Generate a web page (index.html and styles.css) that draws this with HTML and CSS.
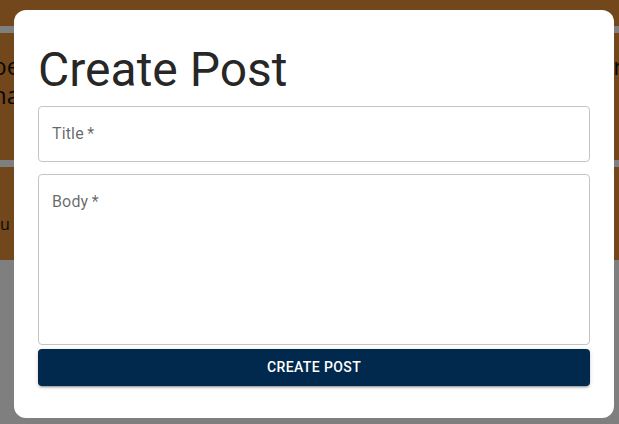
FILE: index.html
```html
<!DOCTYPE html>
<html lang="en">
<head>
<meta charset="utf-8">
<title>Create Post</title>
<link rel="stylesheet" href="styles.css">
</head>
<body>
<main class="page">
  <div class="card card-top"></div>
  <div class="card card-mid">
    <div class="line big"><span class="lead">be</span><span class="tail">r</span></div>
    <div class="line big"><span class="lead">ha</span></div>
  </div>
  <div class="card card-low">
    <div class="line small"><span>u</span></div>
  </div>
</main>
<div class="backdrop"></div>
<section class="modal">
  <h1 class="heading">Create Post</h1>
  <form class="form">
    <div class="field field-title"><span class="label">Title&thinsp;*</span></div>
    <div class="field field-body"><span class="label">Body&thinsp;*</span></div>
    <button type="button" class="submit">Create Post</button>
  </form>
</section>
</body>
</html>
```

FILE: styles.css
```css
html, body {
  margin: 0;
  padding: 0;
  height: 100%;
}
body {
  background: #ffffff;
  font-family: "Open Sans", "DejaVu Sans", sans-serif;
  overflow: hidden;
}
.page {
  display: flex;
  flex-direction: column;
  gap: 7px;
}
.card {
  background: #e58f37;
  color: #111;
}
.card-top {
  height: 26px;
}
.card-mid {
  height: 127px;
  display: flex;
  flex-direction: column;
  padding-top: 18px;
  box-sizing: border-box;
}
.card-low {
  height: 93px;
  padding-top: 46px;
  box-sizing: border-box;
}
.line {
  display: flex;
  justify-content: space-between;
}
.line.big {
  font-size: 24px;
  line-height: 29px;
}
.lead {
  margin-left: -8px;
}
.tail {
  margin-right: -4px;
}
.line.small {
  font-size: 16px;
  line-height: 22px;
}
.backdrop {
  position: fixed;
  inset: 0;
  background: rgba(0, 0, 0, 0.5);
}
.modal {
  position: absolute;
  left: 14px;
  top: 10px;
  width: 600px;
  box-sizing: border-box;
  padding: 32px 24px 32px 24px;
  background: #fff;
  border-radius: 12px;
  font-family: Roboto, "Liberation Sans", sans-serif;
}
.heading {
  margin: 0 0 8px 0;
  font-size: 48px;
  line-height: 56px;
  font-weight: 400;
  color: rgba(0, 0, 0, 0.87);
}
.form {
  display: flex;
  flex-direction: column;
}
.field {
  box-sizing: border-box;
  border: 1px solid #c4c4c4;
  border-radius: 4px;
  padding: 15px 13px;
}
.field-title {
  height: 56px;
}
.field-body {
  height: 171px;
  margin-top: 12px;
}
.label {
  display: block;
  font-size: 16px;
  line-height: 23px;
  color: rgba(0, 0, 0, 0.6);
  letter-spacing: 0.00938em;
}
.submit {
  margin-top: 4px;
  height: 36.5px;
  border: 0;
  border-radius: 4px;
  background: #01284d;
  color: #fff;
  font-family: Roboto, "Liberation Sans", sans-serif;
  font-size: 14px;
  font-weight: 500;
  letter-spacing: 0.02857em;
  text-transform: uppercase;
  box-shadow: 0 3px 1px -2px rgba(0,0,0,0.2), 0 2px 2px 0 rgba(0,0,0,0.14), 0 1px 5px 0 rgba(0,0,0,0.12);
  cursor: pointer;
}
```
